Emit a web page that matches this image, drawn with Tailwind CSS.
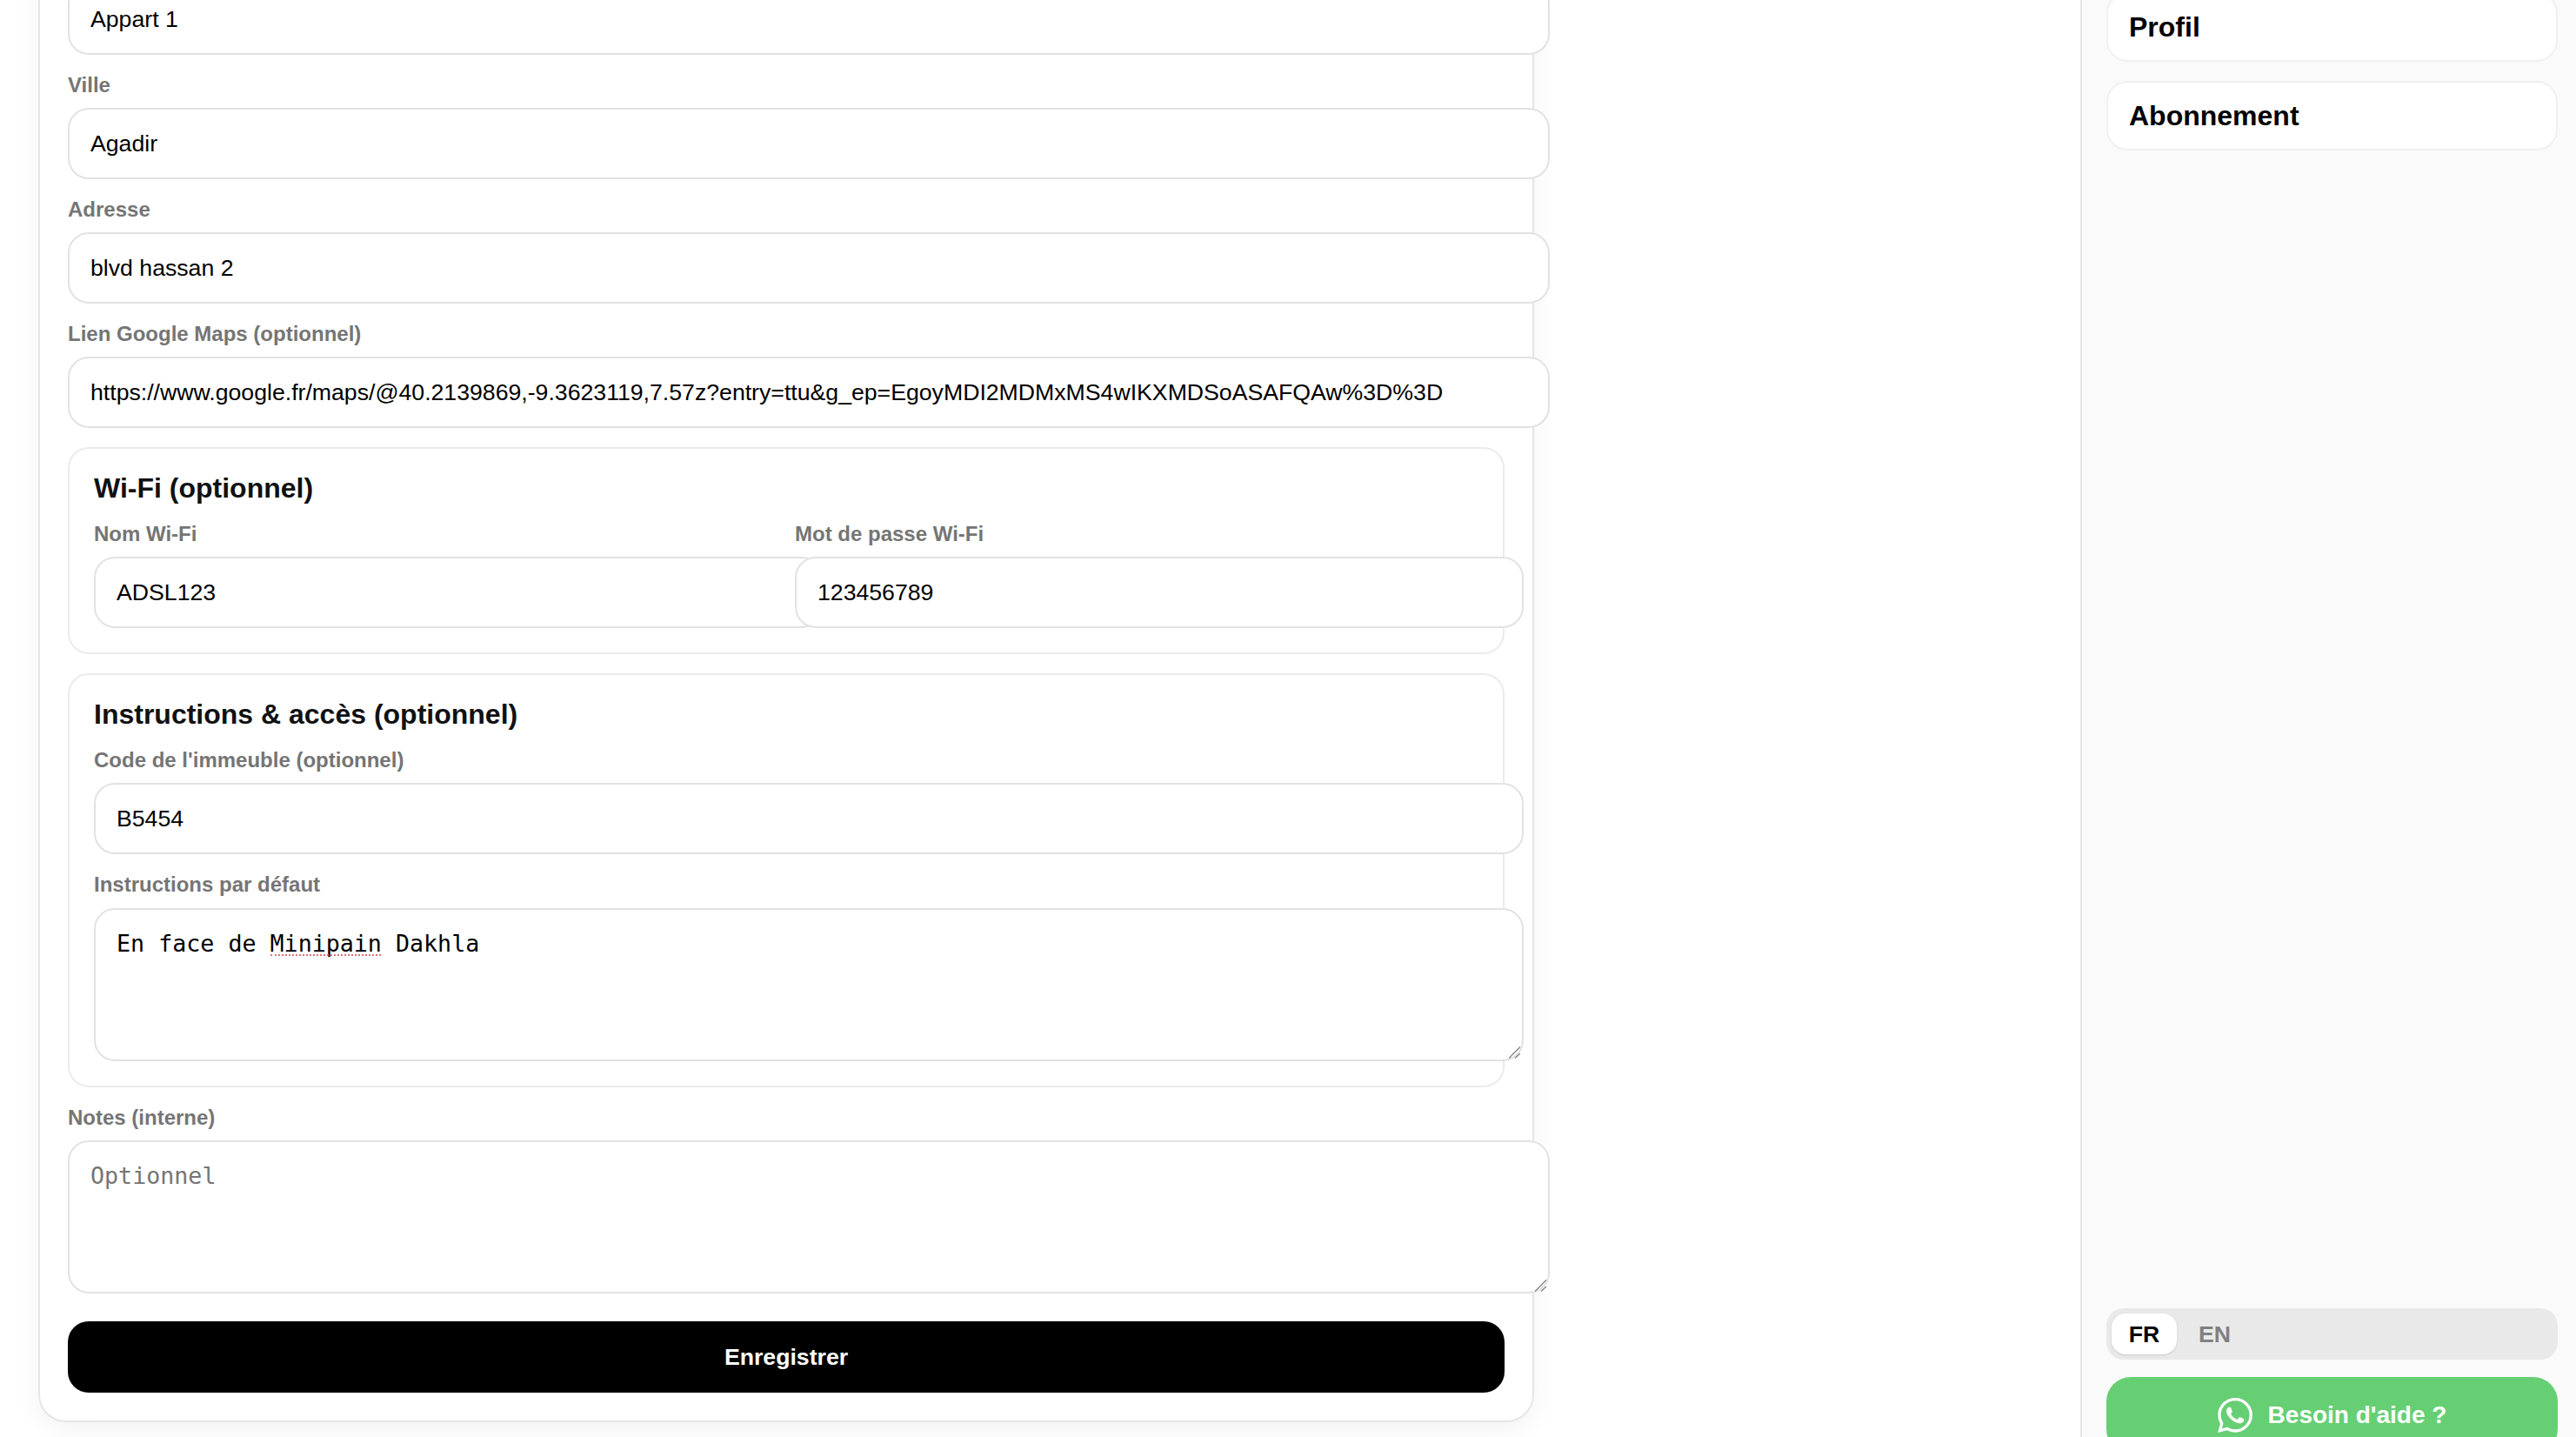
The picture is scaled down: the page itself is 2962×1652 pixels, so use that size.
<!DOCTYPE html>
<html lang="fr">
  <head>
    <meta charset="utf-8" />
    <title>Logement</title>
    <script src="https://cdn.jsdelivr.net/npm/@tailwindcss/browser@4"></script>
  </head>
  <body class="bg-white">
    <div class="flex h-screen overflow-hidden font-['Liberation_Sans',Arial,sans-serif] text-black">
      <!-- Main column -->
      <main class="w-[2392px] shrink-0 pl-[44px]">
        <div class="w-[1720px] -mt-[53px] bg-white border-2 border-[#e6e6e6] rounded-[32px] shadow-[0_8px_30px_rgba(0,0,0,0.05)] p-[32px]">
          <form class="flex flex-col">
            <input type="text" value="Appart 1" class="box-content w-full h-[78px] px-6 bg-white border-2 border-[#e2e2e2] rounded-[24px] text-[26.67px]" />

            <label class="mt-[22px] mb-[13px] h-[26px] leading-[26px] text-[24px] font-bold text-[#757575]">Ville</label>
            <input type="text" value="Agadir" class="box-content w-full h-[78px] px-6 bg-white border-2 border-[#e2e2e2] rounded-[24px] text-[26.67px]" />

            <label class="mt-[22px] mb-[13px] h-[26px] leading-[26px] text-[24px] font-bold text-[#757575]">Adresse</label>
            <input type="text" value="blvd hassan 2" class="box-content w-full h-[78px] px-6 bg-white border-2 border-[#e2e2e2] rounded-[24px] text-[26.67px]" />

            <label class="mt-[22px] mb-[13px] h-[26px] leading-[26px] text-[24px] font-bold text-[#757575]">Lien Google Maps (optionnel)</label>
            <input type="text" value="https://www.google.fr/maps/@40.2139869,-9.3623119,7.57z?entry=ttu&amp;g_ep=EgoyMDI2MDMxMS4wIKXMDSoASAFQAw%3D%3D" class="box-content w-full h-[78px] px-6 bg-white border-2 border-[#e2e2e2] rounded-[24px] text-[26.67px]" />

            <!-- Wi-Fi -->
            <section class="mt-[22px] border-2 border-[#ebebeb] rounded-[24px] p-[28px]">
              <h3 class="h-[34px] leading-[34px] text-[32px] font-bold text-[#111111]">Wi-Fi (optionnel)</h3>
              <div class="grid grid-cols-2 gap-[20px] mt-[23px]">
                <div class="flex flex-col">
                  <label class="mb-[13px] h-[26px] leading-[26px] text-[24px] font-bold text-[#757575]">Nom Wi-Fi</label>
                  <input type="text" value="ADSL123" class="box-content w-full h-[78px] px-6 bg-white border-2 border-[#e2e2e2] rounded-[24px] text-[26.67px]" />
                </div>
                <div class="flex flex-col">
                  <label class="mb-[13px] h-[26px] leading-[26px] text-[24px] font-bold text-[#757575]">Mot de passe Wi-Fi</label>
                  <input type="text" value="123456789" class="box-content w-full h-[78px] px-6 bg-white border-2 border-[#e2e2e2] rounded-[24px] text-[26.67px]" />
                </div>
              </div>
            </section>

            <!-- Instructions -->
            <section class="mt-[22px] border-2 border-[#ebebeb] rounded-[24px] p-[28px] flex flex-col">
              <h3 class="h-[34px] leading-[34px] text-[32px] font-bold text-[#111111]">Instructions &amp; accès (optionnel)</h3>
              <label class="mt-[23px] mb-[13px] h-[26px] leading-[26px] text-[24px] font-bold text-[#757575]">Code de l'immeuble (optionnel)</label>
              <input type="text" value="B5454" class="box-content w-full h-[78px] px-6 bg-white border-2 border-[#e2e2e2] rounded-[24px] text-[26.67px]" />
              <label class="mt-[22px] mb-[14px] h-[26px] leading-[26px] text-[24px] font-bold text-[#757575]">Instructions par défaut</label>
              <div class="relative">
                <textarea spellcheck="false" class="block box-content w-full h-[124px] p-6 bg-white border-2 border-[#e2e2e2] rounded-[24px] resize-none font-['DejaVu_Sans_Mono',monospace] text-[26.67px] leading-[30px]">En face de Minipain Dakhla</textarea>
                <span class="absolute left-[203px] top-[53px] w-[127px] border-b-2 border-dotted border-[#e07070]"></span>
                <svg class="absolute left-[1627px] top-[159px] w-[13px] h-[14px]" viewBox="0 0 13 14" fill="none" stroke="#777777" stroke-width="1.2"><path d="M0 13.5 13 .5M7 13.5 13 8"/></svg>
              </div>
            </section>

            <label class="mt-[22px] mb-[13px] h-[26px] leading-[26px] text-[24px] font-bold text-[#757575]">Notes (interne)</label>
            <div class="relative">
              <textarea spellcheck="false" placeholder="Optionnel" class="block box-content w-full h-[124px] p-6 bg-white border-2 border-[#e2e2e2] rounded-[24px] resize-none font-['DejaVu_Sans_Mono',monospace] text-[26.67px] leading-[30px] placeholder:text-[#757575]"></textarea>
              <svg class="absolute left-[1687px] top-[160px] w-[13px] h-[14px]" viewBox="0 0 13 14" fill="none" stroke="#777777" stroke-width="1.2"><path d="M0 13.5 13 .5M7 13.5 13 8"/></svg>
            </div>

            <button type="button" class="mt-[32px] h-[82px] bg-black text-white rounded-[24px] text-[26.67px] font-bold">Enregistrer</button>
          </form>
        </div>
      </main>

      <!-- Right sidebar -->
      <aside class="flex-1 flex flex-col justify-between bg-[#fafafa] border-l-2 border-[#e8e8e8] pl-[28px] pr-[21px]">
        <nav class="flex flex-col gap-[22px] -mt-[9px]">
          <a class="flex items-center h-[80px] px-[24px] bg-white border-2 border-[#f0f0f0] rounded-[24px] text-[32px] font-bold">Profil</a>
          <a class="flex items-center h-[80px] px-[24px] bg-white border-2 border-[#f0f0f0] rounded-[24px] text-[32px] font-bold">Abonnement</a>
        </nav>
        <div class="flex flex-col gap-[20px] -mb-[19px]">
          <div class="flex items-center gap-[25px] h-[59px] px-[6px] bg-[#e9e9e9] rounded-[20px]">
            <span class="flex items-center justify-center w-[75px] h-[47px] bg-white rounded-[16px] shadow-sm text-[26.67px] font-bold">FR</span>
            <span class="text-[26.67px] font-bold text-[#808080]">EN</span>
          </div>
          <a class="flex items-center justify-center gap-[18px] h-[88px] bg-[#66cf74] rounded-[28px] text-white text-[28px] font-bold">
            <svg class="w-[40px] h-[40px]" viewBox="0 0 24 24" fill="currentColor"><path d="M17.472 14.382c-.297-.149-1.758-.867-2.03-.967-.273-.099-.471-.148-.67.15-.197.297-.767.966-.94 1.164-.173.199-.347.223-.644.075-.297-.15-1.255-.463-2.39-1.475-.883-.788-1.48-1.761-1.653-2.059-.173-.297-.018-.458.13-.606.134-.133.298-.347.446-.52.149-.174.198-.298.298-.497.099-.198.05-.371-.025-.52-.075-.149-.669-1.612-.916-2.207-.242-.579-.487-.5-.669-.51-.173-.008-.371-.01-.57-.01-.198 0-.52.074-.792.372-.272.297-1.04 1.016-1.04 2.479 0 1.462 1.065 2.875 1.213 3.074.149.198 2.096 3.2 5.077 4.487.709.306 1.262.489 1.694.625.712.227 1.36.195 1.871.118.571-.085 1.758-.719 2.006-1.413.248-.694.248-1.289.173-1.413-.074-.124-.272-.198-.57-.347m-5.421 7.403h-.004a9.87 9.87 0 01-5.031-1.378l-.361-.214-3.741.982.998-3.648-.235-.374a9.86 9.86 0 01-1.51-5.26c.001-5.45 4.436-9.884 9.888-9.884 2.64 0 5.122 1.03 6.988 2.898a9.825 9.825 0 012.893 6.994c-.003 5.45-4.437 9.884-9.885 9.884m8.413-18.297A11.815 11.815 0 0012.05 0C5.495 0 .16 5.335.157 11.892c0 2.096.547 4.142 1.588 5.945L.057 24l6.305-1.654a11.882 11.882 0 005.683 1.448h.005c6.554 0 11.89-5.335 11.893-11.893a11.821 11.821 0 00-3.48-8.413z"/></svg>
            <span>Besoin d'aide ?</span>
          </a>
        </div>
      </aside>
    </div>
  </body>
</html>
